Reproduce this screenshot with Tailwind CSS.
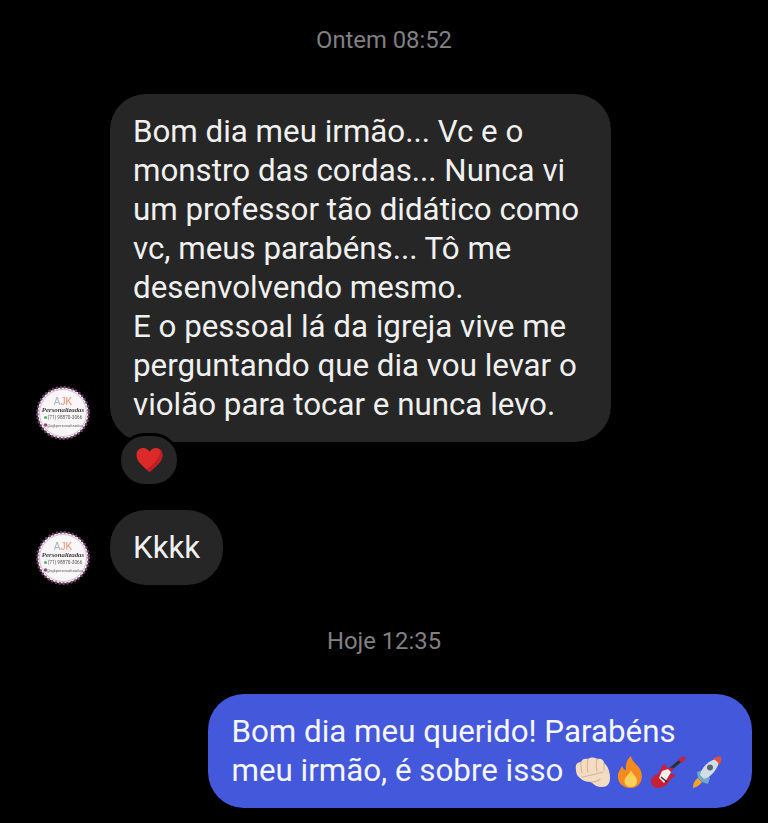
<!doctype html>
<html lang="pt-BR">
<head>
<meta charset="utf-8">
<script src="https://cdn.jsdelivr.net/npm/@tailwindcss/browser@4"></script>
</head>
<body class="bg-black">
<main class="w-[768px] h-[823px] overflow-hidden bg-black font-['Roboto',sans-serif] flex flex-col">

  <p class="mt-[27px] h-[26px] text-center text-[23.800px] leading-[26px] text-[#808080]">Ontem 08:52</p>

  <div class="mt-[41px] flex items-end pl-[36px]">
    <svg class="w-[54px] h-[54px] mb-[2px] shrink-0 blur-[0.4px]" viewBox="0 0 54 54" role="img" aria-label="AJK Personalizados">
      <circle cx="27" cy="27" r="25.500" fill="#fbf7f9"/>
      <circle cx="27" cy="27" r="25.700" fill="none" stroke="#6f4268" stroke-width="2.800" stroke-linecap="round" stroke-dasharray="0 3.94"/>
      <circle cx="27" cy="27" r="23.500" fill="none" stroke="#d9b8cf" stroke-width="1"/>
      <text x="27" y="19" text-anchor="middle" font-family="Liberation Sans" font-size="10" fill="#e5936f"><tspan fill="#9fb4c9">A</tspan>JK</text>
      <text x="27" y="25.500" text-anchor="middle" font-family="Liberation Serif" font-style="italic" font-weight="700" font-size="6.800" fill="#3d3a3d">Personalizadas</text>
      <circle cx="9.500" cy="31.500" r="1.500" fill="#4fb46b"/>
      <text x="29" y="33" text-anchor="middle" font-family="Roboto" font-size="4.700" fill="#555">(71) 98870-3066</text>
      <circle cx="9.500" cy="39" r="1.800" fill="#8d4a78"/>
      <text x="29" y="41" text-anchor="middle" font-family="Roboto" font-size="4" fill="#666">@ajkpersonalizados</text>
    </svg>
    <div class="relative ml-[20px] w-[501px] h-[348px] rounded-[36px] bg-[#262626] px-[23px] py-[18px] text-[31.300px] leading-[39px] text-[#f0f0f0] whitespace-nowrap">
      <p>Bom dia meu irmão... Vc e o<br>monstro das cordas... Nunca vi<br>um professor tão didático como<br>vc, meus parabéns... Tô me<br>desenvolvendo mesmo.<br>E o pessoal lá da igreja vive me<br>perguntando que dia vou levar o<br>violão para tocar e nunca levo.</p>
      <div class="absolute left-[8px] top-[339px] w-[62px] h-[54px] rounded-full bg-[#262626] border-[3px] border-black flex items-center justify-center">
        <svg class="w-[29px] h-[26px]" viewBox="0 0 30 28" role="img" aria-label="coração">
          <path d="M15 27C9 21.500 1 16 1 8.500 1 3.800 4.500 1 8.200 1 11 1 13.500 2.500 15 5.200 16.500 2.500 19 1 21.800 1 25.500 1 29 3.800 29 8.500 29 16 21 21.500 15 27Z" fill="#dc2a2a"/>
          <path d="M15 27C21 21.500 29 16 29 8.500 29 6 28 4 26.500 3 27 11 20 18 12 24.300Z" fill="#bf1f24"/>
        </svg>
      </div>
    </div>
  </div>

  <div class="mt-[68px] flex items-end pl-[36px]">
    <svg class="w-[54px] h-[54px] shrink-0 blur-[0.4px]" viewBox="0 0 54 54" role="img" aria-label="AJK Personalizados">
      <circle cx="27" cy="27" r="25.500" fill="#fbf7f9"/>
      <circle cx="27" cy="27" r="25.700" fill="none" stroke="#6f4268" stroke-width="2.800" stroke-linecap="round" stroke-dasharray="0 3.94"/>
      <circle cx="27" cy="27" r="23.500" fill="none" stroke="#d9b8cf" stroke-width="1"/>
      <text x="27" y="19" text-anchor="middle" font-family="Liberation Sans" font-size="10" fill="#e5936f"><tspan fill="#9fb4c9">A</tspan>JK</text>
      <text x="27" y="25.500" text-anchor="middle" font-family="Liberation Serif" font-style="italic" font-weight="700" font-size="6.800" fill="#3d3a3d">Personalizadas</text>
      <circle cx="9.500" cy="31.500" r="1.500" fill="#4fb46b"/>
      <text x="29" y="33" text-anchor="middle" font-family="Roboto" font-size="4.700" fill="#555">(71) 98870-3066</text>
      <circle cx="9.500" cy="39" r="1.800" fill="#8d4a78"/>
      <text x="29" y="41" text-anchor="middle" font-family="Roboto" font-size="4" fill="#666">@ajkpersonalizados</text>
    </svg>
    <div class="ml-[20px] w-[113px] h-[75px] rounded-[36px] bg-[#262626] px-[23px] py-[18px] text-[31.300px] leading-[39px] text-[#f0f0f0]">Kkkk</div>
  </div>

  <p class="mt-[43px] h-[26px] text-center text-[23.800px] leading-[26px] text-[#808080]">Hoje 12:35</p>

  <div class="mt-[40px] ml-[208px] w-[544px] h-[114px] rounded-[36px] bg-[#4458dc] px-[23.500px] py-[18px] text-[31.300px] leading-[39px] text-[#f5f6fe] whitespace-nowrap">
    <p>Bom dia meu querido! Parabéns</p>
    <div class="flex items-center h-[39px]">
      <span>meu irmão, é sobre isso</span>
      <div class="flex items-center ml-[12px] mt-[3px]">
        <svg class="w-[35px] h-[31px]" viewBox="0 0 35 31" role="img" aria-label="soco">
          <path d="M1 13C0 8 2 5 6 5 7 2 10 1 13 2 15 0 20 0 22 2 26 1 29 3 29 6 33 9 35 15 35 21 35 27 32 30 27 30 22 30 19 28 16 25 12 25 8 24 5 21 2 19 1 16 1 13Z" fill="#f3dcc2"/>
          <path d="M6 5C6 9 6 13 7 16M13 2C12 7 12 11 13 15M22 2C21 7 21 10 22 14M29 6C29 9 29 11 29 13M7 20C14 19 21 17 28 15M16 25C20 25 23 24 25 22" fill="none" stroke="#d6b595" stroke-width="1.100" stroke-linecap="round"/>
        </svg>
        <svg class="ml-[7px] w-[27px] h-[32px]" viewBox="0 0 27 32" role="img" aria-label="fogo">
          <path d="M14 0C15 6 20 8 23 13 27 20 25 32 13.500 32 4 32 0 25 1 18 2 15 4 12 5 10 6 12 7 14 9 14 8 9 10 3 14 0Z" fill="#f58a1f"/>
          <path d="M14 14C15 18 20 20 20 25 20 29 17 31 13.500 31 10 31 7 28 7.500 24 8 21 12 19 14 14Z" fill="#fcd25a"/>
        </svg>
        <svg class="ml-[7px] w-[35px] h-[32px]" viewBox="0 0 35 32" role="img" aria-label="guitarra">
          <path d="M17 15L29 5" stroke="#2e2e2e" stroke-width="3"/>
          <path d="M27 4L32 0 35 2 31 7Z" fill="#c8213c"/>
          <path d="M14 8C15 8 15 11 16 12 18 12 21 11 22 12 23 13 20 16 19 18 22 18 24 18 24 19 23 22 19 23 18 25 17 29 12 32 7 32 3 32 0 29 0 25 0 21 4 19 7 18 9 15 11 8 14 8Z" fill="#c91f37"/>
          <path d="M11 15L17 13 20 16 16 23 13 27 8 22Z" fill="#f6f0ea"/>
          <path d="M10 21L16 26" stroke="#333" stroke-width="1.500"/>
        </svg>
        <svg class="ml-[7px] w-[29px] h-[32px]" viewBox="0 0 29 32" role="img" aria-label="foguete">
          <path d="M0 32C0 27 2 24 5 22L9 26C7 29 4 31 0 32Z" fill="#f5a623"/>
          <path d="M9 26L5 22 4 16 10 14 17 22 15 28Z" fill="#6fa8c9"/>
          <path d="M7 19C9 11 15 5 23 3 24 3 26 5 26 6 24 14 18 21 11 23Z" fill="#d5dde3"/>
          <path d="M20 3C22 1 26 0 28 1 29 3 28 7 26 9 25 6 23 4 20 3Z" fill="#e2503a"/>
          <circle cx="17" cy="11.500" r="3" fill="#55697a"/>
        </svg>
      </div>
    </div>
  </div>
</main>
</body>
</html>
